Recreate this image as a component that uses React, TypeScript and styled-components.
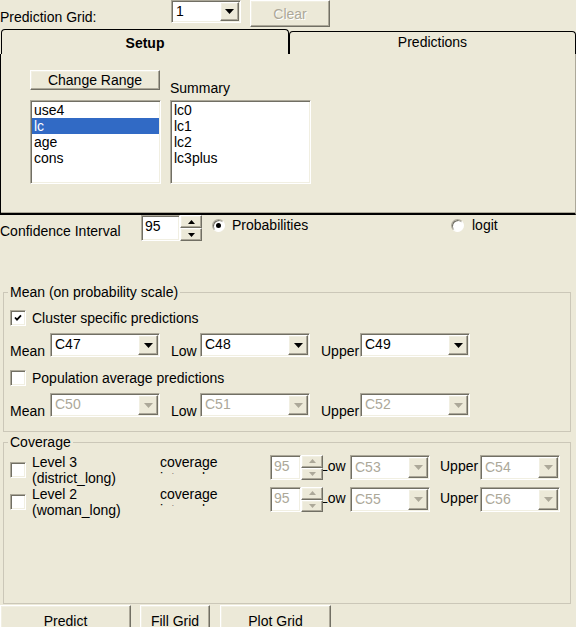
import React from 'react';
import styled, { createGlobalStyle, css } from 'styled-components';

const BG = '#ECE9D8';
const DIS = '#ACA899';

const Global = createGlobalStyle`
  html, body { margin: 0; padding: 0; background: ${BG}; }
  body { font-family: "Liberation Sans", Arial, sans-serif; font-size: 14px; line-height: 16px; color: #000; }
  *, *::before, *::after { box-sizing: border-box; }
`;

const sunken = css`
  border: 1px solid;
  border-color: #aca899 #ffffff #ffffff #aca899;
  box-shadow: inset 1px 1px #716f64, inset -1px -1px #f1efe2;
`;

const raised = css`
  border: 1px solid;
  border-color: #ffffff #716f64 #716f64 #ffffff;
  box-shadow: inset -1px -1px #aca899, inset 1px 1px #f1efe2;
`;

const Window = styled.div`
  width: 576px;
  height: 627px;
  overflow: hidden;
  display: flex;
  flex-direction: column;
  background: ${BG};
`;

/* ---------- top bar ---------- */
const TopBar = styled.div`
  display: flex;
  align-items: flex-start;
  height: 29px;
  flex: none;
`;

const TopLabel = styled.span`
  width: 171px;
  padding-top: 9px;
  white-space: nowrap;
`;

const PushButton = styled.button<{ $w: number; $h: number; $disabled?: boolean }>`
  ${raised};
  width: ${(p) => p.$w}px;
  height: ${(p) => p.$h}px;
  flex: none;
  margin: 0;
  padding: 0;
  background: ${BG};
  font: inherit;
  line-height: 16px;
  text-align: center;
  color: ${(p) => (p.$disabled ? DIS : '#000')};
  text-shadow: ${(p) => (p.$disabled ? '1px 1px #fff' : 'none')};
`;

const ClearButton = styled(PushButton)`
  margin-left: 9px;
`;

/* ---------- combo ---------- */
const ComboBox = styled.div<{ $w: number; $h: number }>`
  ${sunken};
  width: ${(p) => p.$w}px;
  height: ${(p) => p.$h}px;
  flex: none;
  background: #fff;
  display: flex;
  padding: 1px;
`;

const ComboText = styled.span<{ $disabled?: boolean }>`
  flex: 1;
  display: flex;
  align-items: center;
  padding: 0 0 2px 3px;
  white-space: nowrap;
  color: ${(p) => (p.$disabled ? DIS : '#000')};
`;

const ComboArrow = styled.span<{ $w: number }>`
  ${raised};
  width: ${(p) => p.$w}px;
  flex: none;
  background: ${BG};
  display: flex;
  align-items: center;
  justify-content: center;
`;

const Tri = ({ up, color, w = 7, h = 4 }: { up?: boolean; color: string; w?: number; h?: number }) => (
  <svg width={w} height={h} viewBox={`0 0 ${w} ${h}`}>
    <path d={up ? `M0 ${h}H${w}L${w / 2} 0Z` : `M0 0H${w}L${w / 2} ${h}Z`} fill={color} />
  </svg>
);

const Combo = ({ value, w, h, disabled, aw = 20 }: { value: string; w: number; h: number; disabled?: boolean; aw?: number }) => (
  <ComboBox $w={w} $h={h}>
    <ComboText $disabled={disabled}>{value}</ComboText>
    <ComboArrow $w={aw}>
      <Tri w={9} h={5} color={disabled ? DIS : '#000'} />
    </ComboArrow>
  </ComboBox>
);

/* ---------- tabs ---------- */
const TabRow = styled.div`
  display: flex;
  align-items: flex-end;
  height: 25px;
  flex: none;
  padding-left: 1px;
`;

const Tab = styled.div<{ $selected?: boolean }>`
  height: ${(p) => (p.$selected ? 25 : 23)}px;
  width: ${(p) => (p.$selected ? '288px' : 'auto')};
  flex: ${(p) => (p.$selected ? 'none' : '1')};
  border: 1px solid #000;
  border-bottom: none;
  border-radius: 4px 4px 0 0;
  text-align: center;
  padding-top: ${(p) => (p.$selected ? 5 : 2)}px;
  font-weight: ${(p) => (p.$selected ? 'bold' : 'normal')};
  background: ${BG};
`;

const Panel = styled.div`
  height: 161px;
  flex: none;
  border-left: 1px solid #000;
  border-right: 1px solid #aca899;
  border-bottom: 2px solid #000;
  box-shadow: inset 0 -1px #aca899;
  display: flex;
  gap: 9px;
  padding-left: 29px;
`;

const PanelColumn = styled.div<{ $top: number }>`
  display: flex;
  flex-direction: column;
  padding-top: ${(p) => p.$top}px;
`;

const ChangeRangeButton = styled(PushButton)`
  margin-bottom: 10px;
`;

const ColumnLabel = styled.span`
  margin-bottom: 4px;
`;

const ListBox = styled.div<{ $w: number }>`
  ${sunken};
  width: ${(p) => p.$w}px;
  height: 84px;
  background: #fff;
  padding: 1px;
`;

const ListItem = styled.div<{ $selected?: boolean }>`
  height: 16px;
  padding-left: 2px;
  background: ${(p) => (p.$selected ? '#316ac5' : 'transparent')};
  color: ${(p) => (p.$selected ? '#fff' : '#000')};
`;

/* ---------- spinner ---------- */
const SpinnerWrap = styled.div<{ $mt?: number }>`
  display: flex;
  flex: none;
  position: relative;
  z-index: 1;
  margin-top: ${(p) => p.$mt || 0}px;
`;

const SpinField = styled.div<{ $w: number; $h: number; $disabled?: boolean }>`
  ${sunken};
  width: ${(p) => p.$w}px;
  height: ${(p) => p.$h}px;
  background: #fff;
  padding: 2px 0 0 3px;
  color: ${(p) => (p.$disabled ? DIS : '#000')};
`;

const SpinButtons = styled.div<{ $h: number }>`
  display: flex;
  flex-direction: column;
  width: 22px;
  height: ${(p) => p.$h}px;
`;

const SpinButton = styled.span`
  ${raised};
  flex: 1;
  background: ${BG};
  display: flex;
  align-items: center;
  justify-content: center;
`;

const Spinner = ({ value, w, h, disabled, mt }: { value: string; w: number; h: number; disabled?: boolean; mt?: number }) => (
  <SpinnerWrap $mt={mt}>
    <SpinField $w={w} $h={h} $disabled={disabled}>{value}</SpinField>
    <SpinButtons $h={h}>
      <SpinButton>
        <Tri up w={7} h={4} color={disabled ? DIS : '#000'} />
      </SpinButton>
      <SpinButton>
        <Tri w={7} h={4} color={disabled ? DIS : '#000'} />
      </SpinButton>
    </SpinButtons>
  </SpinnerWrap>
);

/* ---------- confidence row ---------- */
const ConfRow = styled.div`
  display: flex;
  align-items: flex-start;
  height: 26px;
  flex: none;
`;

const ConfLabel = styled.span`
  width: 141px;
  align-self: flex-end;
  margin-bottom: 2px;
  white-space: nowrap;
`;

const RadioOption = styled.div<{ $w?: number; $gap: number; $ml?: number }>`
  display: flex;
  align-items: center;
  height: 20px;
  gap: ${(p) => p.$gap}px;
  width: ${(p) => (p.$w ? `${p.$w}px` : 'auto')};
  margin-left: ${(p) => p.$ml || 0}px;
  flex: none;
`;

const RadioCircle = styled.span<{ $on?: boolean }>`
  width: 13px;
  height: 13px;
  border-radius: 50%;
  background: #fff;
  border: 1px solid;
  border-color: #aca899 #ffffff #ffffff #aca899;
  box-shadow: inset 1px 1px #716f64;
  display: flex;
  align-items: center;
  justify-content: center;
  flex: none;
  &::after {
    content: '';
    width: 5px;
    height: 5px;
    border-radius: 50%;
    background: ${(p) => (p.$on ? '#000' : 'transparent')};
  }
`;

/* ---------- group boxes ---------- */
const Group = styled.fieldset<{ $mt: number }>`
  margin: ${(p) => p.$mt}px 0 0 3px;
  padding: 0;
  width: 568px;
  min-width: 0;
  flex: none;
  border: 1px solid #cbc7b8;
`;

const Legend = styled.legend`
  padding: 0 2px;
  margin-left: 4px;
  line-height: 16px;
`;

const MeanBody = styled.div`
  padding: 8px 6px 14px;
  display: flex;
  flex-direction: column;
`;

const CheckRow = styled.div<{ $mt?: number }>`
  display: flex;
  align-items: center;
  gap: 6px;
  height: 20px;
  margin-top: ${(p) => p.$mt || 0}px;
`;

const CheckBox = styled.span`
  ${sunken};
  width: 16px;
  height: 16px;
  flex: none;
  background: #fff;
  display: flex;
  align-items: center;
  justify-content: center;
`;

const Check = ({ checked }: { checked?: boolean }) => (
  <CheckBox>
    {checked && (
      <svg width="8" height="8" viewBox="0 0 8 8">
        <path d="M1 3.5L3 5.6L7 1.4" fill="none" stroke="#000" strokeWidth="1.8" />
      </svg>
    )}
  </CheckBox>
);

const ComboRow = styled.div<{ $mt: number }>`
  display: flex;
  align-items: flex-end;
  height: 24px;
  margin-top: ${(p) => p.$mt}px;
`;

const RowLabel = styled.span<{ $w: number; $pl?: number }>`
  width: ${(p) => p.$w}px;
  padding-left: ${(p) => p.$pl || 0}px;
  margin-bottom: -2px;
  flex: none;
  white-space: nowrap;
`;

const CovBody = styled.div`
  height: 153px;
  padding: 4px 6px 0;
  display: flex;
  flex-direction: column;
`;

const CovRow = styled.div`
  display: flex;
  align-items: flex-start;
  height: 32px;
  flex: none;
`;

const CovCheck = styled.div`
  align-self: center;
  display: flex;
`;

const LevelLabel = styled.span`
  width: 128px;
  margin-left: 6px;
  flex: none;
`;

const CovLabel = styled.span`
  width: 110px;
  height: 20px;
  overflow: hidden;
  flex: none;
`;

const InlineLabel = styled.span<{ $w: number; $ml?: number; $pl?: number }>`
  width: ${(p) => p.$w}px;
  margin-left: ${(p) => p.$ml || 0}px;
  padding-left: ${(p) => p.$pl || 0}px;
  padding-top: 4px;
  flex: none;
  white-space: nowrap;
`;

const ComboSlot = styled.div`
  margin-top: 1px;
  display: flex;
`;

/* ---------- bottom ---------- */
const BottomBar = styled.div`
  display: flex;
  margin-top: 1px;
  flex: none;
`;

const BottomButton = styled(PushButton)<{ $ml?: number }>`
  margin-left: ${(p) => p.$ml || 0}px;
  padding-top: 2px;
  align-self: flex-start;
  display: block;
`;

const covRows = [
  { a: 'Level 3', b: '(district_long)', low: 'C53', up: 'C54' },
  { a: 'Level 2', b: '(woman_long)', low: 'C55', up: 'C56' },
];

export default function App() {
  return (
    <Window>
      <Global />
      <TopBar>
        <TopLabel>Prediction Grid:</TopLabel>
        <Combo value="1" w={70} h={23} aw={19} />
        <ClearButton $w={80} $h={27} $disabled>
          Clear
        </ClearButton>
      </TopBar>

      <TabRow>
        <Tab $selected>Setup</Tab>
        <Tab>Predictions</Tab>
      </TabRow>

      <Panel>
        <PanelColumn $top={16}>
          <ChangeRangeButton $w={130} $h={20}>Change Range</ChangeRangeButton>
          <ListBox $w={131}>
            <ListItem>use4</ListItem>
            <ListItem $selected>lc</ListItem>
            <ListItem>age</ListItem>
            <ListItem>cons</ListItem>
          </ListBox>
        </PanelColumn>
        <PanelColumn $top={26}>
          <ColumnLabel>Summary</ColumnLabel>
          <ListBox $w={141}>
            <ListItem>lc0</ListItem>
            <ListItem>lc1</ListItem>
            <ListItem>lc2</ListItem>
            <ListItem>lc3plus</ListItem>
          </ListBox>
        </PanelColumn>
      </Panel>

      <ConfRow>
        <ConfLabel>Confidence Interval</ConfLabel>
        <Spinner value="95" w={39} h={26} />
        <RadioOption $w={239} $gap={7} $ml={10}>
          <RadioCircle $on />
          <span>Probabilities</span>
        </RadioOption>
        <RadioOption $gap={8}>
          <RadioCircle />
          <span>logit</span>
        </RadioOption>
      </ConfRow>

      <Group $mt={43}>
        <Legend>Mean (on probability scale)</Legend>
        <MeanBody>
          <CheckRow>
            <Check checked />
            <span>Cluster specific predictions</span>
          </CheckRow>
          <ComboRow $mt={5}>
            <RowLabel $w={40}>Mean</RowLabel>
            <Combo value="C47" w={110} h={24} />
            <RowLabel $w={40} $pl={11}>Low</RowLabel>
            <Combo value="C48" w={110} h={24} />
            <RowLabel $w={50} $pl={11}>Upper</RowLabel>
            <Combo value="C49" w={110} h={24} />
          </ComboRow>
          <CheckRow $mt={11}>
            <Check />
            <span>Population average predictions</span>
          </CheckRow>
          <ComboRow $mt={5}>
            <RowLabel $w={40}>Mean</RowLabel>
            <Combo value="C50" w={110} h={24} disabled />
            <RowLabel $w={40} $pl={11}>Low</RowLabel>
            <Combo value="C51" w={110} h={24} disabled />
            <RowLabel $w={50} $pl={11}>Upper</RowLabel>
            <Combo value="C52" w={110} h={24} disabled />
          </ComboRow>
        </MeanBody>
      </Group>

      <Group $mt={2}>
        <Legend>Coverage</Legend>
        <CovBody>
          {covRows.map((r) => (
            <CovRow key={r.a}>
              <CovCheck>
                <Check />
              </CovCheck>
              <LevelLabel>
                {r.a}
                <br />
                {r.b}
              </LevelLabel>
              <CovLabel>
                coverage
                <br />
                interval
              </CovLabel>
              <Spinner value="95" w={31} h={25} disabled mt={1} />
              <InlineLabel $w={30} $ml={-3}>Low</InlineLabel>
              <ComboSlot>
                <Combo value={r.low} w={80} h={25} disabled />
              </ComboSlot>
              <InlineLabel $w={50} $pl={10}>Upper</InlineLabel>
              <ComboSlot>
                <Combo value={r.up} w={80} h={25} disabled />
              </ComboSlot>
            </CovRow>
          ))}
        </CovBody>
      </Group>

      <BottomBar>
        <BottomButton $w={131} $h={30}>Predict</BottomButton>
        <BottomButton $w={70} $h={30} $ml={9}>Fill Grid</BottomButton>
        <BottomButton $w={111} $h={30} $ml={10}>Plot Grid</BottomButton>
      </BottomBar>
    </Window>
  );
}
